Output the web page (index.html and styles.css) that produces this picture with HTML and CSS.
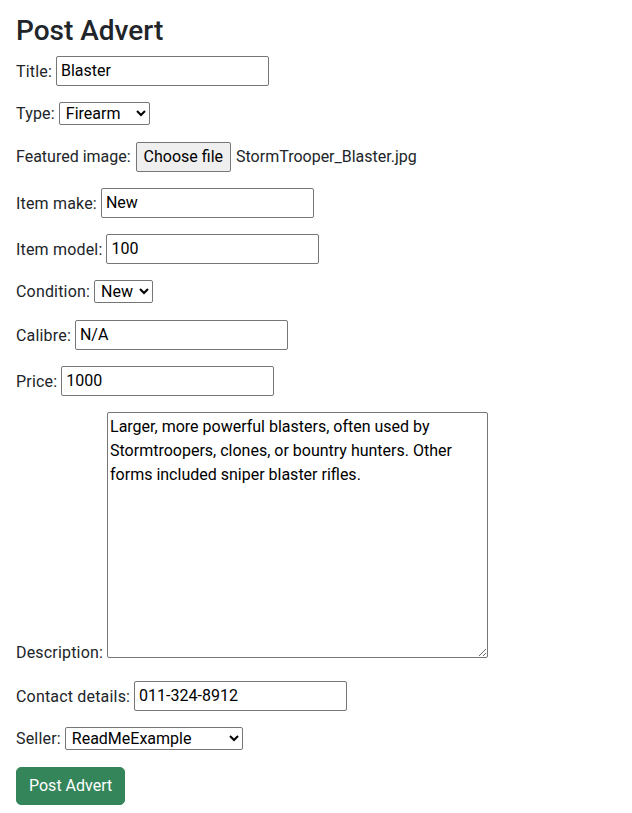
FILE: index.html
```html
<!DOCTYPE html>
<html lang="en">
<head>
<meta charset="utf-8">
<title>Post Advert</title>
<link rel="stylesheet" href="styles.css">
</head>
<body>
<main class="page">
  <h3 class="title">Post Advert</h3>
  <form class="form">
    <div class="field">
      <label for="title">Title:</label>
      <input id="title" class="text" type="text" value="Blaster">
    </div>
    <div class="field">
      <label for="type">Type:</label>
      <select id="type" class="sel sel-type">
        <option>Firearm</option>
        <option>Blaster</option>
      </select>
    </div>
    <div class="field">
      <label class="file-label">Featured image:</label>
      <span class="file-btn">Choose file</span>
      <span class="file-name">StormTrooper_Blaster.jpg</span>
    </div>
    <div class="field">
      <label for="make">Item make:</label>
      <input id="make" class="text" type="text" value="New">
    </div>
    <div class="field">
      <label for="model">Item model:</label>
      <input id="model" class="text" type="text" value="100">
    </div>
    <div class="field">
      <label for="cond">Condition:</label>
      <select id="cond" class="sel sel-cond">
        <option>New</option>
        <option>Used</option>
      </select>
    </div>
    <div class="field">
      <label for="cal">Calibre:</label>
      <input id="cal" class="text" type="text" value="N/A">
    </div>
    <div class="field">
      <label for="price">Price:</label>
      <input id="price" class="text" type="text" value="1000">
    </div>
    <div class="field">
      <label for="desc">Description:</label>
      <textarea id="desc" class="desc">Larger, more powerful blasters, often used by Stormtroopers, clones, or bountry hunters. Other forms included sniper blaster rifles.</textarea>
    </div>
    <div class="field">
      <label for="contact">Contact details:</label>
      <input id="contact" class="text" type="text" value="011-324-8912">
    </div>
    <div class="field">
      <label for="seller">Seller:</label>
      <select id="seller" class="sel sel-seller">
        <option>ReadMeExample</option>
      </select>
    </div>
    <button type="button" class="submit">Post Advert</button>
  </form>
</main>
</body>
</html>
```
FILE: styles.css
```css
* { box-sizing: border-box; }
html, body { margin: 0; background: #fff; }
body {
  font-family: Roboto, "Liberation Sans", sans-serif;
  font-size: 16px;
  line-height: 1.5;
  color: #212529;
}
.page { padding: 14px 16px 0; }
.title {
  margin: 0 0 8px;
  font-size: 28px;
  font-weight: 500;
  line-height: 1.2;
  color: #212529;
}
.form { margin: 0; }
.field { margin: 0 0 16px; }
.field label { letter-spacing: 0.18px; }
.field .file-label { letter-spacing: 0; }
input, select, textarea, button {
  font-family: inherit;
  font-size: inherit;
  line-height: inherit;
  margin: 0;
}
.text {
  width: 213px;
  height: 30px;
  padding: 1px 4px;
  border: 1px solid #767676;
  border-radius: 2px;
  color: #000;
  background: #fff;
}
.sel {
  height: 23px;
  border: 1px solid #767676;
  border-radius: 2px;
  color: #000;
  background: #fff;
  padding: 0 2px;
  line-height: normal;
}
.sel-type { width: 91px; }
.sel-cond { width: 59px; }
.sel-seller { width: 178px; }
.file-btn {
  display: inline-block;
  padding: 2px 7px;
  border: 1px solid #767676;
  border-radius: 2px;
  background: #efefef;
  color: #000;
  margin-left: 1px;
}
.file-name { color: #212529; margin-left: 1px; }
.desc {
  width: 381px;
  height: 246px;
  padding: 2px;
  border: 1px solid #767676;
  border-radius: 2px;
  color: #000;
  resize: both;
  vertical-align: baseline;
}
.submit {
  display: inline-block;
  padding: 6px 12px;
  border: 1px solid #35855a;
  border-radius: 5px;
  background: #35855a;
  color: #fff;
  cursor: pointer;
}
```
